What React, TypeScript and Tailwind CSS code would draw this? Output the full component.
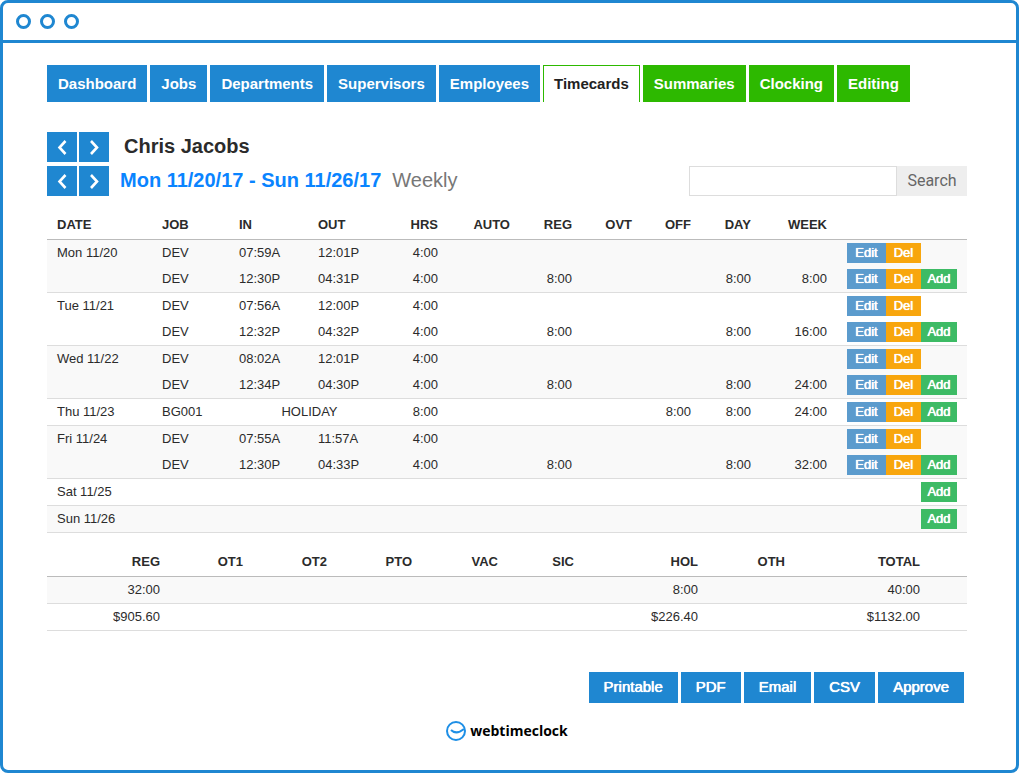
import React from 'react';

type Entry = {
  job: string;
  in?: string;
  out?: string;
  note?: string;
  hrs: string;
  reg?: string;
  off?: string;
  day?: string;
  week?: string;
};

type Day = { date: string; entries: Entry[] };

const tabs = [
  { label: 'Dashboard', style: 'bg-[#1f87d1] px-[11px] text-white' },
  { label: 'Jobs', style: 'bg-[#1f87d1] px-[11px] text-white' },
  { label: 'Departments', style: 'bg-[#1f87d1] px-[11px] text-white' },
  { label: 'Supervisors', style: 'bg-[#1f87d1] px-[11px] text-white' },
  { label: 'Employees', style: 'bg-[#1f87d1] px-[11px] text-white' },
  {
    label: 'Timecards',
    style: 'border-x border-t border-x-[#2db900] border-t-[#2db900] bg-white px-[10px] text-[#222]',
    active: true,
  },
  { label: 'Summaries', style: 'bg-[#2db900] px-[11px] text-white' },
  { label: 'Clocking', style: 'bg-[#2db900] px-[11px] text-white' },
  { label: 'Editing', style: 'bg-[#2db900] px-[11px] text-white' },
];

const columns = [
  { label: 'DATE', width: 'w-[105px]', align: 'text-left' },
  { label: 'JOB', width: 'w-[77px]', align: 'text-left' },
  { label: 'IN', width: 'w-[79px]', align: 'text-left' },
  { label: 'OUT', width: 'w-[82px]', align: 'text-left' },
  { label: 'HRS', width: 'w-[58px]', align: 'text-right' },
  { label: 'AUTO', width: 'w-[72px]', align: 'text-right' },
  { label: 'REG', width: 'w-[62px]', align: 'text-right' },
  { label: 'OVT', width: 'w-[60px]', align: 'text-right' },
  { label: 'OFF', width: 'w-[59px]', align: 'text-right' },
  { label: 'DAY', width: 'w-[60px]', align: 'text-right' },
  { label: 'WEEK', width: 'w-[76px]', align: 'text-right' },
  { label: '', width: 'w-[130px]', align: 'text-right' },
];

const days: Day[] = [
  {
    date: 'Mon 11/20',
    entries: [
      { job: 'DEV', in: '07:59A', out: '12:01P', hrs: '4:00' },
      { job: 'DEV', in: '12:30P', out: '04:31P', hrs: '4:00', reg: '8:00', day: '8:00', week: '8:00' },
    ],
  },
  {
    date: 'Tue 11/21',
    entries: [
      { job: 'DEV', in: '07:56A', out: '12:00P', hrs: '4:00' },
      { job: 'DEV', in: '12:32P', out: '04:32P', hrs: '4:00', reg: '8:00', day: '8:00', week: '16:00' },
    ],
  },
  {
    date: 'Wed 11/22',
    entries: [
      { job: 'DEV', in: '08:02A', out: '12:01P', hrs: '4:00' },
      { job: 'DEV', in: '12:34P', out: '04:30P', hrs: '4:00', reg: '8:00', day: '8:00', week: '24:00' },
    ],
  },
  {
    date: 'Thu 11/23',
    entries: [{ job: 'BG001', note: 'HOLIDAY', hrs: '8:00', off: '8:00', day: '8:00', week: '24:00' }],
  },
  {
    date: 'Fri 11/24',
    entries: [
      { job: 'DEV', in: '07:55A', out: '11:57A', hrs: '4:00' },
      { job: 'DEV', in: '12:30P', out: '04:33P', hrs: '4:00', reg: '8:00', day: '8:00', week: '32:00' },
    ],
  },
  { date: 'Sat 11/25', entries: [] },
  { date: 'Sun 11/26', entries: [] },
];

const totals = [
  { label: 'REG', width: 'w-[113px]', hours: '32:00', pay: '$905.60' },
  { label: 'OT1', width: 'w-[83px]' },
  { label: 'OT2', width: 'w-[84px]' },
  { label: 'PTO', width: 'w-[85px]' },
  { label: 'VAC', width: 'w-[86px]' },
  { label: 'SIC', width: 'w-[76px]' },
  { label: 'HOL', width: 'w-[124px]', hours: '8:00', pay: '$226.40' },
  { label: 'OTH', width: 'w-[87px]' },
  { label: 'TOTAL', width: 'w-[135px]', hours: '40:00', pay: '$1132.00' },
  { label: '', width: 'w-[47px]' },
];

const actions = ['Printable', 'PDF', 'Email', 'CSV', 'Approve'];

// buttons reset text-shadow, so it has to sit on the button itself
const buttonText = 'text-white [text-shadow:0_0_0_#fff,0_0_1px_#fff]';

function Pager({ label }: { label: string }) {
  return (
    <div className="flex gap-[2px]">
      <button type="button" aria-label={`Previous ${label}`} className="bg-[#1f87d1]">
        <svg width="30" height="30" fill="none" stroke="#fff" strokeWidth="2.6">
          <path d="M18.5 9l-6 6.5 6 6.5" />
        </svg>
      </button>
      <button type="button" aria-label={`Next ${label}`} className="bg-[#1f87d1]">
        <svg width="30" height="30" fill="none" stroke="#fff" strokeWidth="2.6">
          <path d="M12 9l6 6.5-6 6.5" />
        </svg>
      </button>
    </div>
  );
}

function RowButtons({ edit, add }: { edit: boolean; add: boolean }) {
  return (
    <div className="flex h-5">
      {edit && (
        <>
          <button type="button" className={`w-[39px] bg-[#5b9bcd] ${buttonText}`}>
            Edit
          </button>
          <button type="button" className={`w-[35px] bg-[#f8a60d] ${buttonText}`}>
            Del
          </button>
        </>
      )}
      {add && (
        <button type="button" className={`w-9 bg-[#3dbb65] ${buttonText} ${edit ? '' : 'ml-auto'}`}>
          Add
        </button>
      )}
    </div>
  );
}

function DayRows({ day, shaded }: { day: Day; shaded: boolean }) {
  const cell = 'px-[10px] py-[3px]';
  const lastCell = `${cell} border-b border-[#ddd]`;

  return (
    <tbody className={shaded ? 'bg-[#f9f9f9]' : 'bg-white'}>
      {day.entries.length === 0 && (
        <tr>
          <td className={lastCell}>{day.date}</td>
          <td className={lastCell} colSpan={10} />
          <td className={lastCell}>
            <RowButtons edit={false} add />
          </td>
        </tr>
      )}
      {day.entries.map((entry, i) => {
        const last = i === day.entries.length - 1;
        const td = last ? lastCell : cell;
        return (
          <tr key={i}>
            <td className={td}>{i === 0 && day.date}</td>
            <td className={td}>{entry.job}</td>
            {entry.note ? (
              <td className={`${td} text-center`} colSpan={2}>
                {entry.note}
              </td>
            ) : (
              <>
                <td className={td}>{entry.in}</td>
                <td className={td}>{entry.out}</td>
              </>
            )}
            <td className={`${td} text-right`}>{entry.hrs}</td>
            <td className={td} />
            <td className={`${td} text-right`}>{entry.reg}</td>
            <td className={td} />
            <td className={`${td} text-right`}>{entry.off}</td>
            <td className={`${td} text-right`}>{entry.day}</td>
            <td className={`${td} text-right`}>{entry.week}</td>
            <td className={td}>
              <RowButtons edit add={last} />
            </td>
          </tr>
        );
      })}
    </tbody>
  );
}

export default function App() {
  return (
    <div className="flex min-h-screen flex-col rounded-lg border-[3px] border-[#1f87d1] bg-white font-['Liberation_Sans',Arial,sans-serif] text-[13px] leading-5 text-[#2b2b2b]">
      <div className="flex h-10 items-center gap-[9px] border-b-[3px] border-[#1f87d1] px-[13px]">
        <span className="size-[15px] rounded-full border-[3px] border-[#1f87d1]" />
        <span className="size-[15px] rounded-full border-[3px] border-[#1f87d1]" />
        <span className="size-[15px] rounded-full border-[3px] border-[#1f87d1]" />
      </div>

      <main className="pt-[22px] pr-[49px] pb-7 pl-11">
        <nav className="flex gap-[3px] text-[15px] font-bold">
          {tabs.map((tab) => (
            <a
              key={tab.label}
              href="#"
              aria-current={tab.active ? 'page' : undefined}
              className={`flex h-[37px] items-center ${tab.style}`}
            >
              {tab.label}
            </a>
          ))}
        </nav>

        <div className="mt-[30px] flex items-end justify-between">
          <div className="flex flex-col gap-1">
            <div className="flex items-start gap-[15px]">
              <Pager label="employee" />
              <h1 className="text-xl leading-7 font-bold">Chris Jacobs</h1>
            </div>
            <div className="flex items-start gap-[11px] text-xl leading-7">
              <Pager label="week" />
              <h2 className="font-bold text-[#0a84ff]">Mon 11/20/17 - Sun 11/26/17</h2>
              <span className="text-[#777]">Weekly</span>
            </div>
          </div>
          <form className="flex h-[30px]" role="search">
            <input
              type="search"
              aria-label="Search timecards"
              className="w-52 border border-[#ddd] bg-white px-2 text-[15px] outline-none"
            />
            <button type="button" className="w-[70px] bg-[#eee] font-['Roboto',sans-serif] text-base text-[#666]">
              Search
            </button>
          </form>
        </div>

        <table className="mt-[15px] w-full table-fixed border-separate border-spacing-0">
          <thead>
            <tr>
              {columns.map((col) => (
                <th
                  key={col.label}
                  className={`border-b border-[#bbb] px-[10px] py-1 font-bold ${col.width} ${col.align}`}
                >
                  {col.label}
                </th>
              ))}
            </tr>
          </thead>
          {days.map((day, i) => (
            <DayRows key={day.date} day={day} shaded={i % 2 === 0} />
          ))}
        </table>

        <table className="mt-[15px] w-full table-fixed border-separate border-spacing-0 text-right">
          <thead>
            <tr>
              {totals.map((col) => (
                <th key={col.label} className={`border-b border-[#bbb] py-1 font-bold ${col.width}`}>
                  {col.label}
                </th>
              ))}
            </tr>
          </thead>
          <tbody>
            <tr className="bg-[#f9f9f9]">
              {totals.map((col) => (
                <td key={col.label} className="h-[27px] border-b border-[#ddd]">
                  {col.hours}
                </td>
              ))}
            </tr>
            <tr>
              {totals.map((col) => (
                <td key={col.label} className="h-[27px] border-b border-[#ddd]">
                  {col.pay}
                </td>
              ))}
            </tr>
          </tbody>
        </table>

        <div className="mt-[41px] flex justify-end gap-[3px] pr-[3px]">
          {actions.map((action) => (
            <button
              key={action}
              type="button"
              className={`h-[31px] bg-[#1f87d1] px-[15px] pb-[2px] text-[15px] ${buttonText}`}
            >
              {action}
            </button>
          ))}
        </div>

        <footer className="mt-[18px] flex items-center justify-center gap-1">
          <svg width="20" height="20" fill="none" stroke="#1e8fe6" strokeWidth="2">
            <circle cx="10" cy="10" r="9" />
            <path d="M5 9c3.5 3.5 8 3 13-1" />
          </svg>
          <span className="font-['Open_Sans',sans-serif] text-sm leading-5 font-bold text-black">webtimeclock</span>
        </footer>
      </main>
    </div>
  );
}
